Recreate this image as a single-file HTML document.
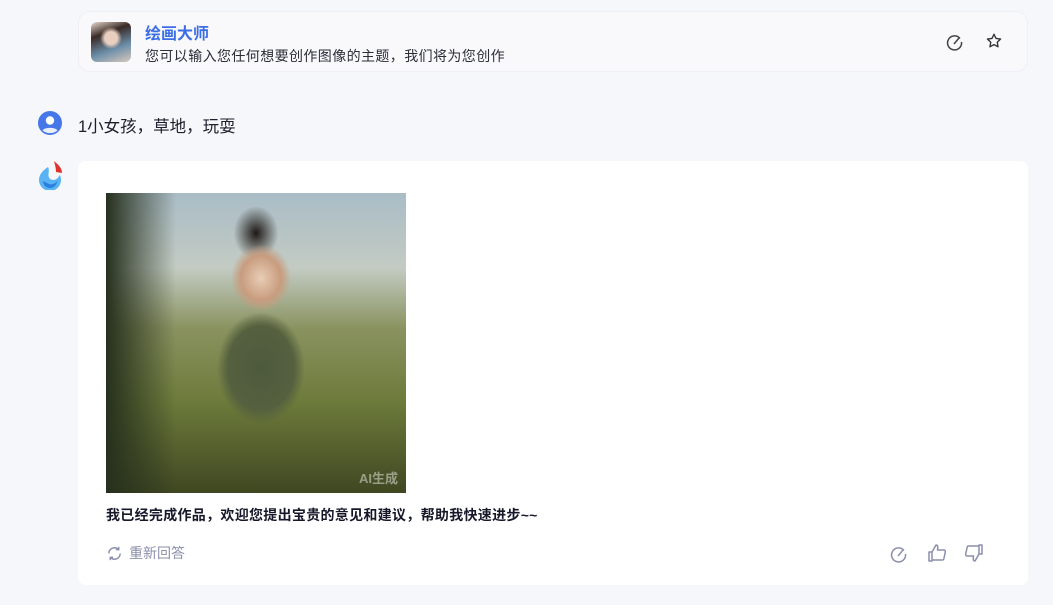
<!DOCTYPE html>
<html><head><meta charset="utf-8"><style>
*{margin:0;padding:0;box-sizing:border-box}
body{width:1053px;height:605px;background:#f6f7fb;font-family:"Liberation Sans","Noto Sans CJK SC",sans-serif;position:relative;overflow:hidden;color:#1d1f2c}
.card1{position:absolute;left:78px;top:11px;width:950px;height:61px;background:#f9f9fc;border:1px solid #eef0f5;border-radius:12px}
.av{position:absolute;left:12px;top:10px;width:40px;height:40px;border-radius:6px;background:radial-gradient(circle at 50% 40%,#e8cfc0 0 20%,transparent 35%),linear-gradient(160deg,#e9dccf 0%,#3a2a25 30%,#6b8ea8 65%,#d9c9bd 100%)}
.t1{position:absolute;left:66px;top:8px;font-size:16px;font-weight:bold;color:#3b6ee6}
.t2{position:absolute;left:66px;top:34px;font-size:14px;letter-spacing:0.4px;color:#2b2d38}
.q{position:absolute;left:78px;top:113px;font-size:16.5px;color:#1d1f2c}
.card2{position:absolute;left:78px;top:161px;width:950px;height:424px;background:#fff;border-radius:8px}
.img{position:absolute;left:28px;top:32px;width:300px;height:300px;overflow:hidden;
background:radial-gradient(ellipse 40px 45px at 155px 85px,#e8cdb6 0%,#c89c7e 50%,transparent 75%),
radial-gradient(ellipse 25px 30px at 150px 40px,#1e1815 0%,transparent 90%),
radial-gradient(ellipse 55px 70px at 155px 175px,#4d5a3c 0%,#55603f 60%,transparent 80%),
linear-gradient(180deg,#a9bcc6 0%,#c3cbc3 25%,#8a9360 45%,#6c7a3a 70%,#3f4722 100%)}
.img:before{content:"";position:absolute;left:0;top:0;width:70px;height:300px;background:linear-gradient(90deg,#26301d,transparent)}
.wm{position:absolute;right:8px;bottom:6px;font-size:13px;color:rgba(255,255,255,.45);font-weight:bold}
.ans{position:absolute;left:28px;top:344px;font-size:14px;letter-spacing:0.3px;font-weight:bold;color:#16182a}
.re{position:absolute;left:28px;top:382px;font-size:14px;color:#8c8fab;display:flex;align-items:center;gap:6px}
</style></head><body>
<div class="card1">
 <div class="av"></div>
 <div class="t1">绘画大师</div>
 <div class="t2">您可以输入您任何想要创作图像的主题，我们将为您创作</div>
 <svg style="position:absolute;left:867px;top:21px" width="18" height="18" viewBox="0 0 18 18" fill="none" stroke="#444" stroke-width="1.5"><path d="M14 5.5A7 7 0 1 0 15.5 9"/><path d="M8 11l5-6"/></svg>
 <svg style="position:absolute;left:906px;top:20px" width="18" height="18" viewBox="0 0 24 24" fill="none" stroke="#333" stroke-width="1.8" stroke-linejoin="round"><path d="M12 3l2.7 5.6 6.1.8-4.5 4.2 1.1 6.1L12 16.8 6.6 19.7l1.1-6.1L3.2 9.4l6.1-.8z"/></svg>
</div>
<svg style="position:absolute;left:38px;top:111px" width="24" height="24" viewBox="0 0 24 24"><circle cx="12" cy="12" r="12" fill="#4677e8"/><circle cx="12" cy="9.5" r="4.2" fill="#fff"/><path d="M4.5 19.5c2-3.5 13-3.5 15 0A12 12 0 0 1 4.5 19.5z" fill="#e8eefc"/></svg>
<div class="q">1小女孩，草地，玩耍</div>
<svg style="position:absolute;left:38px;top:160px" width="26" height="30" viewBox="0 0 26 30"><path d="M16 1c3 3 8 6 8 12l-6-1c0-4-1-7-2-11z" fill="#e0322c"/><path d="M10 7C4 11 1 15 1 20a11 11 0 0 0 22 0c0-2-.5-4-1.5-5-1 3-3.5 5-6.5 5a4.5 4.5 0 0 1-4.5-5c0-3 1-5-.5-8z" fill="#59b3f3"/><path d="M5 21a7 7 0 0 0 14 0c-2 3-5 4-8 3z" fill="#2a7fe0"/></svg>
<div class="card2">
 <div class="img"><div class="wm">AI生成</div></div>
 <div class="ans">我已经完成作品，欢迎您提出宝贵的意见和建议，帮助我快速进步~~</div>
 <div class="re"><svg width="17" height="17" viewBox="0 0 18 18" fill="none" stroke="#8c8fab" stroke-width="1.5"><path d="M3 9a6 6 0 0 1 10.5-4M15 9a6 6 0 0 1-10.5 4"/><path d="M13.5 2v3h-3M4.5 16v-3h3"/></svg>重新回答</div>
 <svg style="position:absolute;left:812px;top:384px" width="18" height="18" viewBox="0 0 18 18" fill="none" stroke="#8c8fab" stroke-width="1.5"><path d="M14 5.5A7 7 0 1 0 15.5 9"/><path d="M8 11l5-6"/></svg>
 <svg style="position:absolute;left:849px;top:382px" width="20" height="20" viewBox="0 0 20 20" fill="none" stroke="#8c8fab" stroke-width="1.5" stroke-linejoin="round"><path d="M2 9h3v9H2zM5 9l4-7c2 0 2 2 1.5 5H17c1 0 1.5 1 1.3 2l-1.5 7c-.2.8-.8 1-1.5 1H5"/></svg>
 <svg style="position:absolute;left:886px;top:382px" width="20" height="20" viewBox="0 0 20 20" fill="none" stroke="#8c8fab" stroke-width="1.5" stroke-linejoin="round"><path d="M18 11h-3V2h3zM15 11l-4 7c-2 0-2-2-1.5-5H3c-1 0-1.5-1-1.3-2l1.5-7c.2-.8.8-1 1.5-1H15"/></svg>
</div>
</body></html>
